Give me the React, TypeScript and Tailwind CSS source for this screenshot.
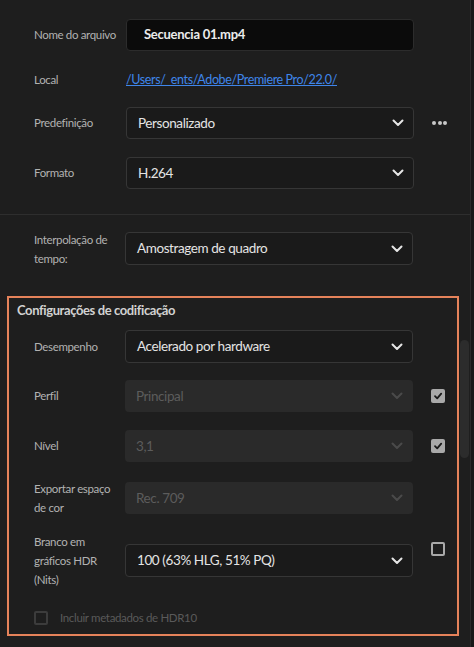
import React from "react";

const Chevron = ({ dim = false }: { dim?: boolean }) => (
  <svg width="12" height="8" viewBox="0 0 12 8" className="shrink-0">
    <path d="M1.5 1.5 L6 6 L10.5 1.5" fill="none" stroke={dim ? "#4a4a4a" : "#e6e6e6"} strokeWidth="2" strokeLinecap="round" strokeLinejoin="round" />
  </svg>
);

const Check = () => (
  <div className="w-[14px] h-[14px] rounded-[2px] bg-[#a9a9a9] flex items-center justify-center">
    <svg width="10" height="10" viewBox="0 0 10 10">
      <path d="M2 5.2 L4.2 7.4 L8.2 2.6" fill="none" stroke="#1a1a1a" strokeWidth="1.8" strokeLinecap="round" strokeLinejoin="round" />
    </svg>
  </div>
);

const Unchecked = ({ dim = false }: { dim?: boolean }) => (
  <div className={`w-[14px] h-[14px] rounded-[2px] border-2 ${dim ? "border-[#3c3c3c]" : "border-[#a9a9a9]"}`} />
);

const Dropdown = ({ value, disabled = false, h = "h-[33px]" }: { value: string; disabled?: boolean; h?: string }) =>
  disabled ? (
    <div className={`w-[288px] ${h} shrink-0 rounded-[4px] bg-[#2a2a2a] flex items-center justify-between pl-[11px] pr-[10px]`}>
      <span className="text-[13.5px] text-[#5c5c5c] tracking-[-0.03em]">{value}</span>
      <Chevron dim />
    </div>
  ) : (
    <div className={`w-[288px] ${h} shrink-0 rounded-[4px] bg-[#1a1a1a] border border-[#363636] flex items-center justify-between pl-[11px] pr-[9px]`}>
      <span className="text-[13.5px] text-[#e4e4e4] tracking-[-0.03em]">{value}</span>
      <Chevron />
    </div>
  );

const labelCls = "text-[11.5px] text-[#b2b2b2] tracking-[-0.03em] shrink-0";

export default function App() {
  return (
    <div className="w-[474px] h-[647px] bg-[#181818] overflow-hidden flex" style={{ fontFamily: "Lato, 'Noto Sans', sans-serif" }}>
      <div className="w-[471px] h-full bg-[#1e1e1e] border-r border-[#2a2a2a] flex flex-col relative">
        {/* top section */}
        <div className="pt-[19px] pb-[25px] border-b border-[#2e2e2e]">
          <div className="flex items-center pl-[34px] h-[32px]">
            <span className={`w-[92px] ${labelCls}`}>Nome do arquivo</span>
            <div className="w-[288px] h-[32px] rounded-[4px] bg-[#0b0b0b] border border-[#2c2c2c] flex items-center pl-[17px]">
              <span className="text-[13px] font-bold text-[#ececec] tracking-[-0.02em]">Secuencia 01.mp4</span>
            </div>
          </div>
          <div className="flex items-center pl-[34px] mt-[17px] h-[24px]">
            <span className={`w-[92px] ${labelCls}`}>Local</span>
            <span className="text-[12.5px] text-[#3f86ea] underline tracking-[-0.03em]">/Users/_ents/Adobe/Premiere Pro/22.0/</span>
          </div>
          <div className="flex items-center pl-[34px] mt-[15px] h-[32px]">
            <span className={`w-[92px] ${labelCls}`}>Predefinição</span>
            <Dropdown value="Personalizado" h="h-[32px]" />
            <div className="ml-[18px] flex gap-[1.5px]">
              <span className="w-[4px] h-[4px] rounded-full bg-[#c8c8c8]" />
              <span className="w-[4px] h-[4px] rounded-full bg-[#c8c8c8]" />
              <span className="w-[4px] h-[4px] rounded-full bg-[#c8c8c8]" />
            </div>
          </div>
          <div className="flex items-center pl-[34px] mt-[18px] h-[32px]">
            <span className={`w-[92px] ${labelCls}`}>Formato</span>
            <Dropdown value="H.264" h="h-[32px]" />
          </div>
        </div>

        {/* interpolation */}
        <div className="flex items-center pl-[34px] mt-[17px] h-[33px]">
          <span className={`w-[91px] leading-[19px] ${labelCls}`}>
            Interpolação de
            <br />
            tempo:
          </span>
          <Dropdown value="Amostragem de quadro" />
        </div>

        {/* encoding box */}
        <div className="ml-[7px] mt-[31px] w-[452px] h-[340px] shrink-0 border-2 border-[#e5825a] flex flex-col">
          <div className="pl-[8px] pt-[4px] leading-[16px] text-[13px] font-bold text-[#d2d2d2] tracking-[-0.03em]">Configurações de codificação</div>
          <div className="flex items-center pl-[25px] mt-[12px] h-[33px]">
            <span className={`w-[91px] ${labelCls}`}>Desempenho</span>
            <Dropdown value="Acelerado por hardware" />
          </div>
          <div className="flex items-center pl-[25px] mt-[17px] h-[32px]">
            <span className={`w-[91px] ${labelCls}`}>Perfil</span>
            <Dropdown value="Principal" disabled h="h-[32px]" />
            <div className="ml-[18px]"><Check /></div>
          </div>
          <div className="flex items-center pl-[25px] mt-[18px] h-[32px]">
            <span className={`w-[91px] ${labelCls}`}>Nível</span>
            <Dropdown value="3,1" disabled h="h-[32px]" />
            <div className="ml-[18px]"><Check /></div>
          </div>
          <div className="flex items-center pl-[25px] mt-[20px] h-[32px]">
            <span className={`w-[91px] leading-[19px] ${labelCls}`}>
              Exportar espaço
              <br />
              de cor
            </span>
            <Dropdown value="Rec. 709" disabled h="h-[32px]" />
          </div>
          <div className="flex items-center pl-[25px] mt-[30px] h-[33px]">
            <span className={`w-[91px] leading-[19px] ${labelCls}`}>
              Branco em
              <br />
              gráficos HDR
              <br />
              (Nits)
            </span>
            <Dropdown value="100 (63% HLG, 51% PQ)" />
            <div className="ml-[18px] self-start -mt-[2px]"><Unchecked /></div>
          </div>
          <div className="flex items-center pl-[25px] mt-[34px] gap-[12px] h-[14px]">
            <Unchecked dim />
            <span className="text-[11.5px] text-[#5a5a5a] tracking-[-0.03em]">Incluir metadados de HDR10</span>
          </div>
        </div>

        {/* scrollbar thumb */}
        <div className="absolute left-[460px] top-[340px] w-[9px] h-[118px] rounded-full bg-[#2c2c2c]" />
      </div>
    </div>
  );
}
